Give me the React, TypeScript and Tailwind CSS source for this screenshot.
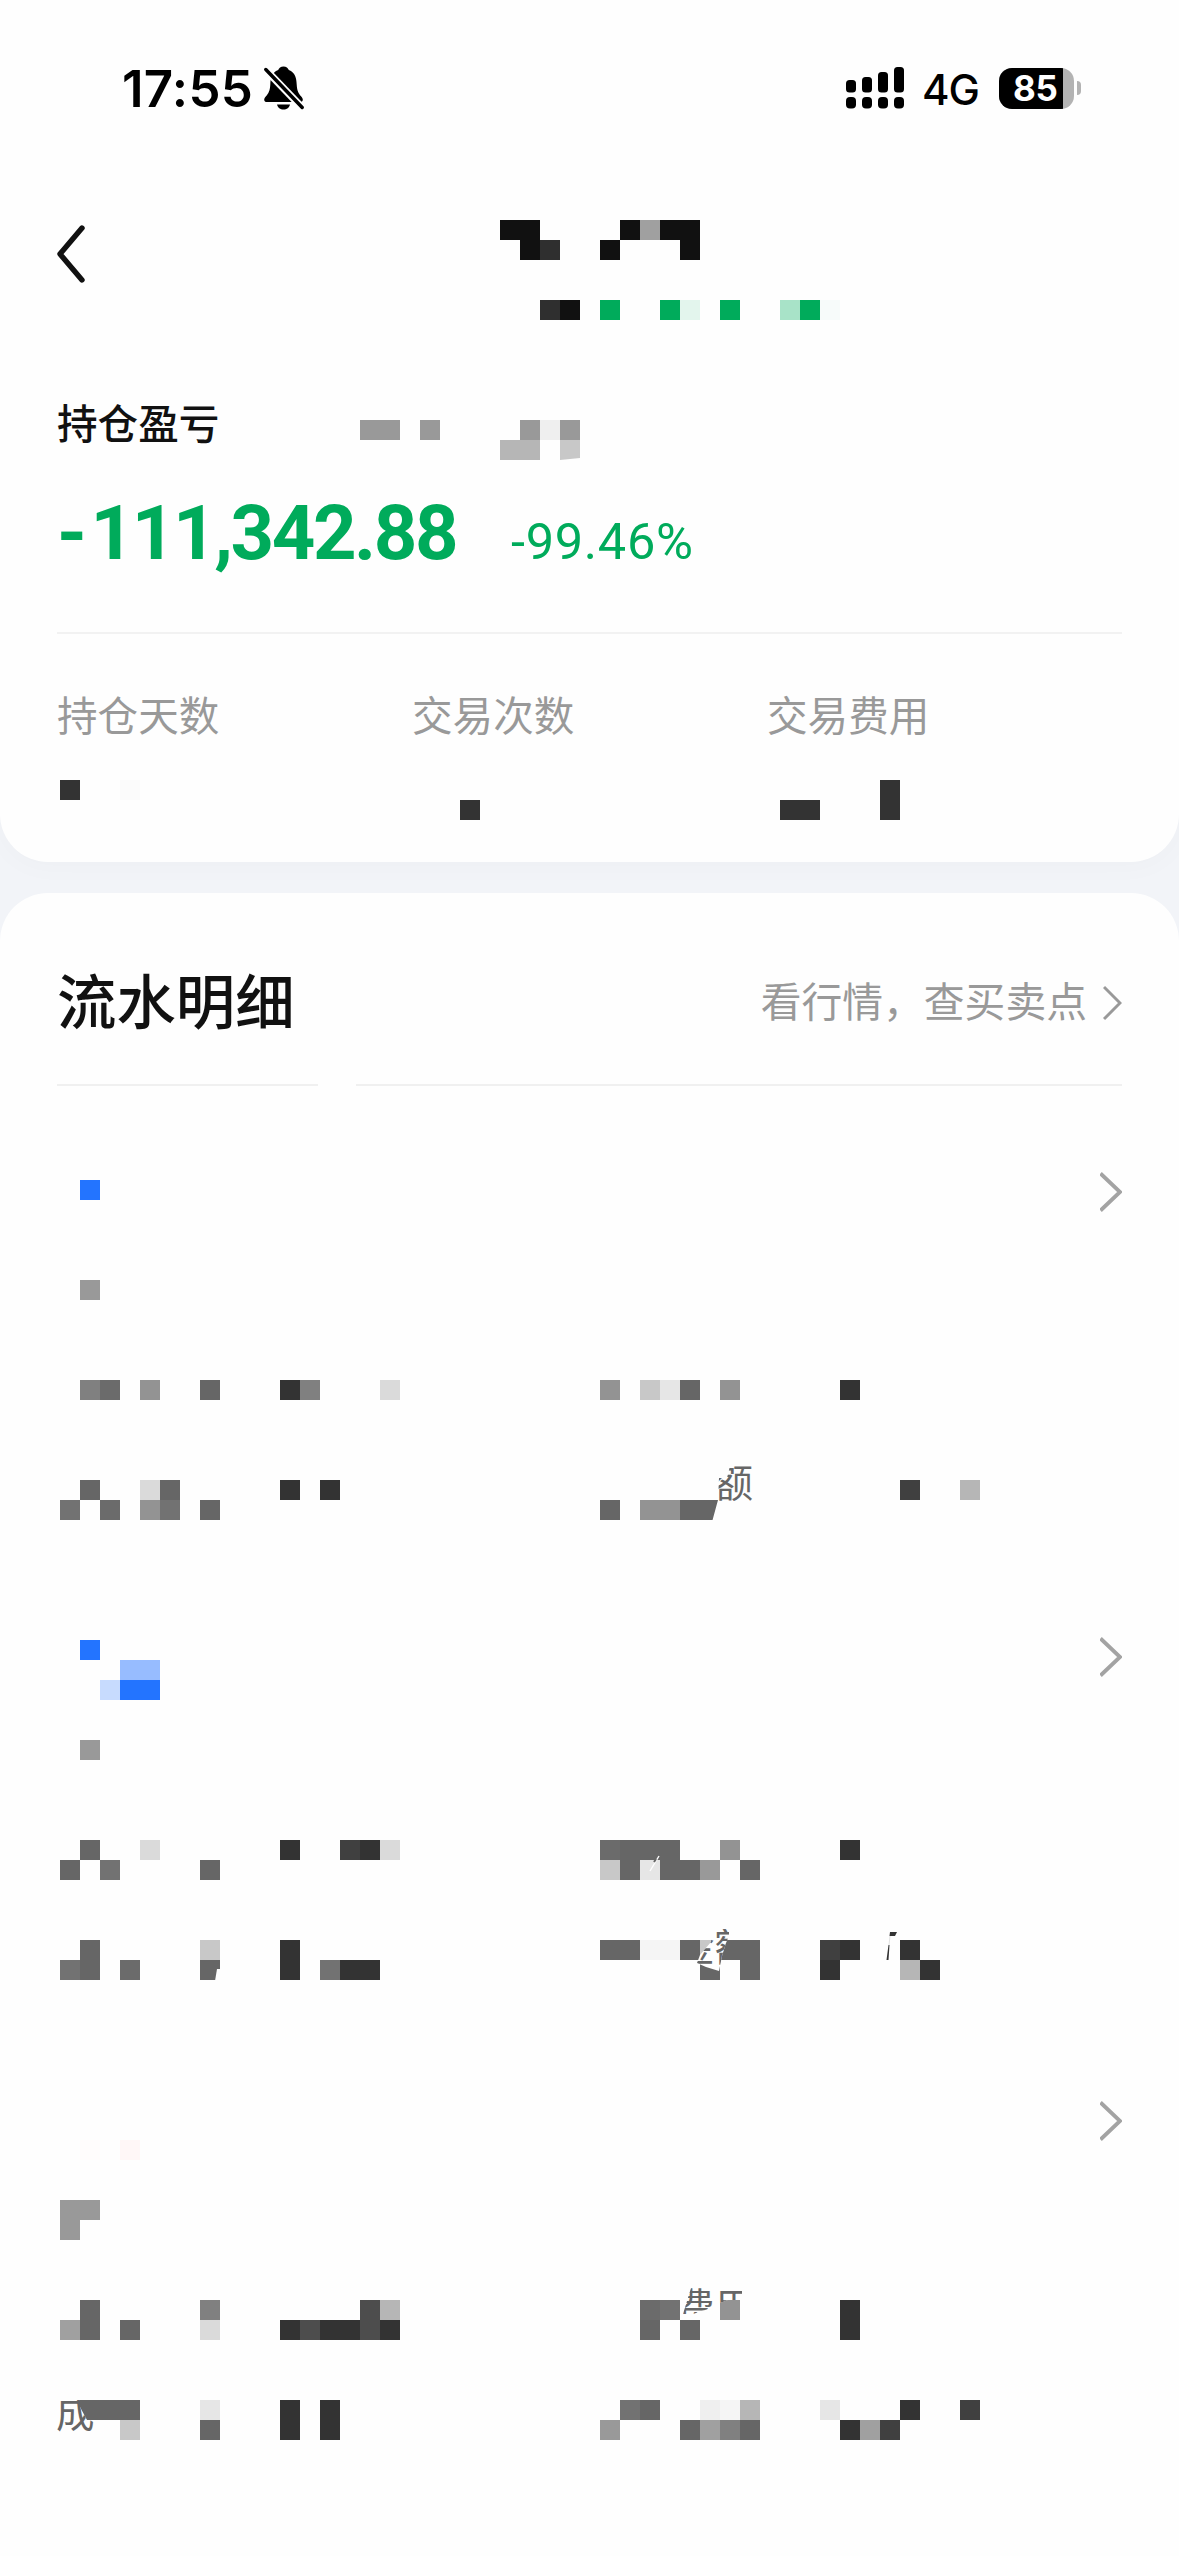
import React from "react"
import clsx from "clsx"

// one character = one 20px block of a masked value
const shades: Record<string, string> = {
  K: "bg-[#111111]",
  J: "bg-[#2f2f2f]",
  D: "bg-[#333333]",
  C: "bg-[#404040]",
  B: "bg-[#4d4d4d]",
  "6": "bg-[#666666]",
  "5": "bg-[#6b6b6b]",
  "7": "bg-[#727272]",
  "8": "bg-[#808080]",
  n: "bg-[#939393]",
  "9": "bg-[#999999]",
  a: "bg-[#a0a0a0]",
  b: "bg-[#b6b6b6]",
  c: "bg-[#c8c8c8]",
  d: "bg-[#dadada]",
  e: "bg-[#e6e6e6]",
  h: "bg-[#efefef]",
  f: "bg-[#f5f5f5]",
  w: "bg-[#fbfbfb]",
  G: "bg-[#00ab5b]",
  H: "bg-[#a8e3c8]",
  I: "bg-[#e3f5ed]",
  i: "bg-[#f7fbfa]",
  U: "bg-[#2374ff]",
  V: "bg-[#97bcff]",
  W: "bg-[#c7dbfe]",
  r: "bg-[#fffcfc]",
  R: "bg-[#fff7f7]",
}

function Mosaic({ rows, className }: { rows: string[]; className?: string }) {
  return (
    <div className={clsx("flex flex-col", className)}>
      {rows.map((row, y) => (
        <div key={y} className="flex h-5">
          {row.split("").map((cell, x) => (
            <span key={x} className={clsx("h-5 w-5 shrink-0", shades[cell])} />
          ))}
        </div>
      ))}
    </div>
  )
}

// part of a label that the mask leaves open
function Reveal({ text, className }: { text: string; className: string }) {
  return (
    <span className={clsx("absolute bg-[#fefefe] pb-5 text-[38.5px] leading-[40px] whitespace-nowrap text-[#666666]", className)}>
      {text}
    </span>
  )
}

function Chevron({ className }: { className?: string }) {
  return (
    <svg viewBox="0 0 22 40" className={clsx("h-10 w-[22px]", className)} fill="none" stroke="#a3a3a3" strokeWidth="3.8">
      <path d="M0.5 1.5 L20 20 L0.5 38.5" />
    </svg>
  )
}

function BellOff() {
  return (
    <svg viewBox="0 0 40 44" className="h-11 w-10">
      <path
        d="M19.5 0.5c-2.800 0-4.600 1.600-5.300 3.500C7.700 6.500 6.600 12 6.300 18.500 6 24.500 4.500 27.500 2 30.200 0.600 31.700 0.200 32.600 0.200 33.700c0 1.500 1.200 2.300 2.800 2.300h33c1.600 0 2.800-0.800 2.800-2.300 0-1.100-0.400-2-1.800-3.500-2.500-2.700-4-5.700-4.300-11.700C32.400 12 31.300 6.500 24.800 4c-0.700-1.900-2.500-3.500-5.300-3.500z"
        fill="#000"
      />
      <path d="M13 38.500h13c-0.600 3-3.300 5-6.500 5s-5.900-2-6.500-5z" fill="#000" />
      <path d="M0 2 L40 43.500" stroke="#fefefe" strokeWidth="7.400" />
      <path d="M1.800 3.500 L38.200 41.500" stroke="#000" strokeWidth="3.400" strokeLinecap="round" />
    </svg>
  )
}

function StatusBar() {
  return (
    <div className="flex h-[176px] items-center pl-[122px] font-['Inter']">
      <span className="w-[142px] text-[51px] leading-none font-semibold tracking-[0.3px] text-black">17:55</span>
      <BellOff />
      <svg viewBox="0 0 58 42" className="ml-[542px] h-[42px] w-[58px]">
        <rect x="0" y="13" width="10" height="12.500" rx="3.500" />
        <rect x="16" y="10" width="10" height="15.500" rx="3.500" />
        <rect x="32" y="5" width="10" height="20.500" rx="3.500" />
        <rect x="48" y="0" width="10" height="25.500" rx="3.500" />
        <rect x="0" y="30" width="10" height="11.500" rx="4" />
        <rect x="16" y="30" width="10" height="11.500" rx="4" />
        <rect x="32" y="30" width="10" height="11.500" rx="4" />
        <rect x="48" y="30" width="10" height="11.500" rx="4" />
      </svg>
      <span className="ml-[18px] w-[77px] pt-[3px] text-[42px] leading-none font-medium tracking-[-1px] text-black">4G</span>
      <div className="flex h-[41px] w-[75px] overflow-hidden rounded-[13px] bg-[#b3b3b3]">
        <span className="w-16 bg-black pl-[14px] text-[35px] leading-[41px] font-bold tracking-[-0.2px] text-white">85</span>
      </div>
      <span className="ml-[3px] h-[14px] w-1 rounded-r-full bg-[#b3b3b3]" />
    </div>
  )
}

interface Stat {
  label: string
  mask: string[]
  offset: string
}

const stats: Stat[] = [
  { label: "持仓天数", mask: ["D..w", ""], offset: "ml-[3px]" },
  { label: "交易次数", mask: ["", "..D"], offset: "ml-2" },
  { label: "交易费用", mask: [".....D", "DD...D"], offset: "ml-[13px]" },
]

interface Field {
  label: string[]
  value: string[]
  overlay?: React.ReactNode
}

interface FlowRecord {
  head: string[]
  date: string[]
  chevron: string
  fields: Field[]
}

const records: FlowRecord[] = [
  {
    head: [".U", "", ""],
    date: [".9", ""],
    chevron: "-mt-2",
    fields: [
      { label: [".85.n..6", ""], value: ["D8...d", ""] },
      { label: ["n.ce6.n", ""], value: [".D", ""] },
      { label: [".6..d6", "7.5.n7.6"], value: ["D.D", ""] },
      {
        label: ["", "6.nn66"],
        value: ["....C..b", ""],
        overlay: (
          <Reveal
            text="成交金额"
            className="-top-4 left-[-1px] [clip-path:polygon(132px_-2px,157px_-2px,157px_58px,113px_58px,119px_36px,120px_14px,128px_14px)]"
          />
        ),
      },
    ],
  },
  {
    head: [".U", "...VV", "..WUU"],
    date: [".9", ""],
    chevron: "-mt-[3px]",
    fields: [
      { label: [".6..d", "6.7....6"], value: ["D..CDd", ""] },
      {
        label: ["5666..n", "c6e669.6"],
        value: [".D", ""],
        overlay: (
          <svg viewBox="0 0 12 18" className="absolute top-[14px] left-[49px] h-[18px] w-3" fill="none">
            <path d="M1 17 L10 2" stroke="#fefefe" strokeWidth="1.400" />
            <path d="M5 8 L7 5" stroke="#666666" strokeWidth="2" />
          </svg>
        ),
      },
      {
        label: [".6.....c", "76.5...6"],
        value: ["D", "D.7DD"],
        overlay: (
          <svg viewBox="0 0 5 12" className="absolute top-[29px] left-[155px] h-3 w-[5px]">
            <path d="M2 0 H5 V12 H0 Z" fill="#fefefe" />
          </svg>
        ),
      },
      {
        label: ["66ff6c66", ".....6.6"],
        value: ["CD..D", "D...bD"],
        overlay: (
          <>
            <Reveal
              text="成交金额"
              className="-top-3 left-[-1px] [clip-path:polygon(113px_1px,130px_1px,130px_8px,127px_15px,123px_28px,120px_43px,107px_39px,98px_35px,101px_27px,106px_21px,112px_14px)]"
            />
            <svg viewBox="0 0 12 30" className="absolute -top-[9px] left-[286px] h-[30px] w-3">
              <path d="M4 1 L11 1 L9 5 L3.500 5 Z M2.500 14 L3.500 14 L2.500 29 L0.500 29 Z" fill="#333333" />
              <path d="M4 5 L3 14" stroke="#dadada" strokeWidth="0.800" />
            </svg>
          </>
        ),
      },
    ],
  },
  {
    head: ["", "", ".r.R"],
    date: ["99", "9"],
    chevron: "mt-px",
    fields: [
      { label: [".6.....8", "a6.6...d"], value: ["....Bb", "DBDDBD"] },
      {
        label: ["..57..n", "..6.6"],
        value: [".D", ".D"],
        overlay: (
          <Reveal
            text="交易费用"
            className="-top-3 left-[-1px] [clip-path:polygon(92px_0px,143px_0px,143px_12px,129px_12px,121px_15px,109px_21px,94px_26px,84px_26px)]"
          />
        ),
      },
      {
        label: [".666...e", "...c...6"],
        value: ["D.D", "D.D"],
        overlay: (
          <Reveal
            text="成"
            className="-top-[6px] -left-1 [clip-path:polygon(0px_6px,24px_6px,24px_13px,31px_26px,39px_26px,39px_40px,0px_40px)]"
          />
        ),
      },
      { label: [".76..hfb", "9...6a86"], value: ["e...D..C", ".DaC"] },
    ],
  },
]

export default function App() {
  return (
    <div className="flex h-[2556px] w-[1179px] flex-col overflow-hidden bg-[#f2f4f8] font-['Liberation_Sans','Noto_Sans_CJK_SC',sans-serif]">
      <section className="h-[862px] shrink-0 rounded-b-[48px] bg-[#fefefe] shadow-[0_4px_30px_rgba(0,0,0,0.025)]">
        <StatusBar />

        {/* nav */}
        <div className="flex h-[228px] items-start pl-[57px]">
          <svg viewBox="0 0 28 64" className="mt-[46px] h-16 w-7" fill="none" stroke="#111" strokeWidth="5.400" strokeLinecap="round" strokeLinejoin="round">
            <path d="M25 6 L3 32 L25 58" />
          </svg>
          <Mosaic
            className="mt-11 ml-[415px]"
            rows={["KK....KaKK", ".KJ..K...K", "", "", "..JK.G..GI.G..HGi"]}
          />
        </div>

        {/* profit and loss */}
        <div className="flex h-[86px] items-start pl-[57px]">
          <h2 className="w-[303px] pt-px text-[40.6px] leading-[40px] font-medium text-[#111111]">持仓盈亏</h2>
          <div className="relative mt-4">
            <Mosaic rows={["99.9....9h9", ".......bb.c"]} />
            <svg viewBox="0 0 20 2" className="absolute top-[38px] left-[200px] h-0.5 w-5">
              <path d="M0 2 L20 0 V2 Z" fill="#fefefe" />
            </svg>
          </div>
        </div>
        <div className="mx-[57px] flex h-[144px] items-baseline border-b-2 border-[#f2f2f2] font-['Roboto'] text-[#00ab5b]">
          <span className="w-[453px] text-[76px] leading-[87px] font-bold tracking-[-2.4px]">
            <span className="mr-[6px]">-</span>111,342.88
          </span>
          <span className="pl-px text-[50.5px] leading-none tracking-[0.7px]">-99.46%</span>
        </div>

        {/* stats */}
        <div className="flex pt-[63px] pl-[57px]">
          {stats.map((stat) => (
            <div key={stat.label} className="w-[355px]">
              <div className="text-[40.6px] leading-[40px] text-[#999999]">{stat.label}</div>
              <Mosaic className={clsx("mt-[43px]", stat.offset)} rows={stat.mask} />
            </div>
          ))}
        </div>
      </section>

      <section className="mt-[31px] flex-1 rounded-t-[48px] bg-[#fefefe]">
        <div className="flex h-[191px] items-center justify-between px-[57px] pt-[30px]">
          <h1 className="text-[59.4px] leading-none font-medium text-[#111111]">流水明细</h1>
          <div className="flex items-center text-[40.8px] leading-none text-[#999999]">
            <span>看行情，查买卖点</span>
            <svg viewBox="0 0 19 36" className="ml-4 h-9 w-[19px]" fill="none" stroke="#999999" strokeWidth="3">
              <path d="M1 2 L17 18 L1 34" />
            </svg>
          </div>
        </div>
        <div className="mx-[57px] flex gap-[38px]">
          <span className="h-0.5 w-[261px] bg-[#f0f0f0]" />
          <span className="h-0.5 flex-1 bg-[#f0f0f0]" />
        </div>

        <div className="flex flex-col gap-[120px] pt-[94px] pr-[57px] pl-[60px]">
          {records.map((record, i) => (
            <div key={i} className="flex flex-col">
              <div className="flex h-[60px] items-start justify-between">
                <Mosaic rows={record.head} />
                <Chevron className={record.chevron} />
              </div>
              <Mosaic className="mt-10 mb-[60px]" rows={record.date} />
              <div className="grid grid-cols-[540px_1fr] gap-y-[60px]">
                {record.fields.map((field, j) => (
                  <div key={j} className="relative flex h-10">
                    <Mosaic className="w-[220px]" rows={field.label} />
                    <Mosaic rows={field.value} />
                    {field.overlay}
                  </div>
                ))}
              </div>
            </div>
          ))}
        </div>
      </section>
    </div>
  )
}
